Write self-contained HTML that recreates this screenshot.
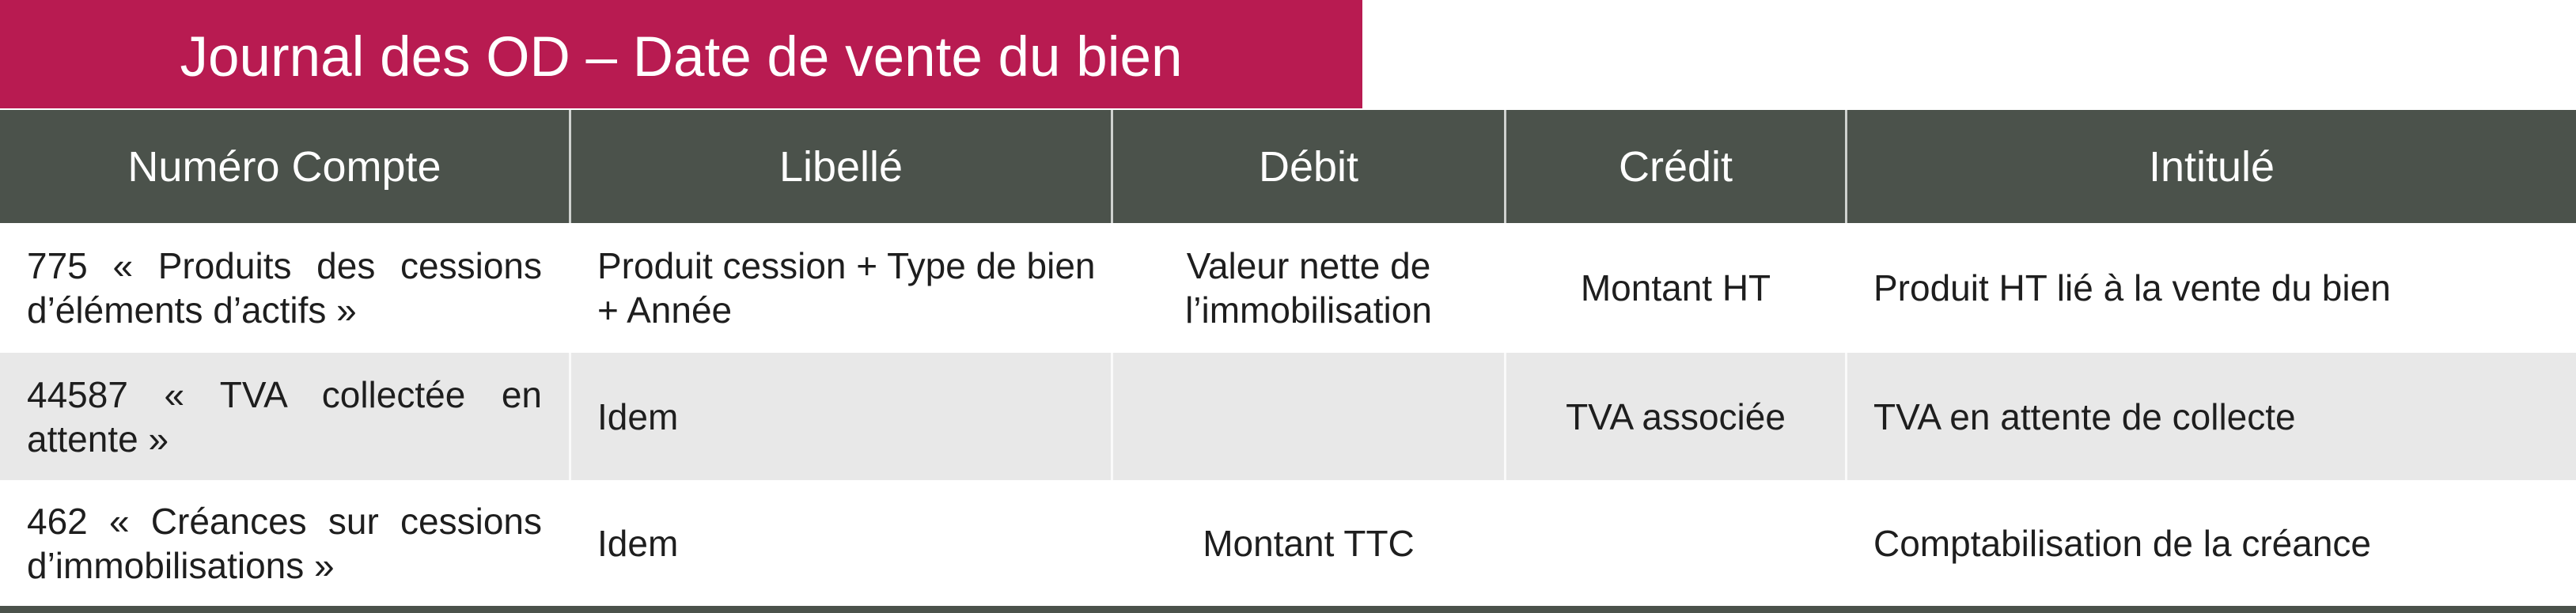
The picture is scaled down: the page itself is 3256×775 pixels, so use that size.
<!DOCTYPE html>
<html><head><meta charset="utf-8"><style>
body{margin:0;width:3256px;height:775px;background:#fff;overflow:hidden;font-family:"Liberation Sans Narrow","Liberation Sans",sans-serif;position:relative}
.ban{position:absolute;left:0;top:0;width:1722px;height:137px;background:#b81b51;color:#fff;font-size:71px;line-height:145px;text-align:center}
.row{position:absolute;left:0;width:3256px}
.c{position:absolute;top:0;bottom:0;display:flex;align-items:center;box-sizing:border-box}
.h{background:#4b524b;color:#fff;font-size:54px;justify-content:center;border-right:3px solid #cfd2cf}
.b{font-size:46px;color:#1e1e1e;line-height:56px;border-right:3px solid #fff}
.g .b{border-right-color:#fafafa}
.j{text-align:justify;text-align-last:left;padding:0 34px;display:block}
</style></head><body>
<div class="ban">Journal des OD – Date de vente du bien</div>
<div class="row" style="top:139px;height:143px">
<div class="c h" style="left:0;width:722px">Numéro Compte</div>
<div class="c h" style="left:722px;width:685px">Libellé</div>
<div class="c h" style="left:1407px;width:497px">Débit</div>
<div class="c h" style="left:1904px;width:431px">Crédit</div>
<div class="c h" style="left:2335px;width:921px;border-right:none">Intitulé</div>
</div>
<div class="row" style="top:282px;height:164px;background:#fff">
<div class="c b" style="left:0;width:722px"><div class="j" style="width:100%;box-sizing:border-box">775 « Produits des cessions d’éléments d’actifs »</div></div>
<div class="c b" style="left:722px;width:685px;padding-left:33px">Produit cession + Type de bien<br>+ Année</div>
<div class="c b" style="left:1407px;width:497px;justify-content:center;text-align:center">Valeur nette de<br>l’immobilisation</div>
<div class="c b" style="left:1904px;width:431px;justify-content:center">Montant HT</div>
<div class="c b" style="left:2335px;width:921px;padding-left:33px;border:none">Produit HT lié à la vente du bien</div>
</div>
<div class="row g" style="top:446px;height:161px;background:#e8e8e8">
<div class="c b" style="left:0;width:722px"><div class="j" style="width:100%;box-sizing:border-box">44587 « TVA collectée en attente »</div></div>
<div class="c b" style="left:722px;width:685px;padding-left:33px">Idem</div>
<div class="c b" style="left:1407px;width:497px"></div>
<div class="c b" style="left:1904px;width:431px;justify-content:center">TVA associée</div>
<div class="c b" style="left:2335px;width:921px;padding-left:33px;border:none">TVA en attente de collecte</div>
</div>
<div class="row" style="top:607px;height:159px;background:#fff">
<div class="c b" style="left:0;width:722px"><div class="j" style="width:100%;box-sizing:border-box">462 « Créances sur cessions d’immobilisations »</div></div>
<div class="c b" style="left:722px;width:685px;padding-left:33px">Idem</div>
<div class="c b" style="left:1407px;width:497px;justify-content:center">Montant TTC</div>
<div class="c b" style="left:1904px;width:431px"></div>
<div class="c b" style="left:2335px;width:921px;padding-left:33px;border:none">Comptabilisation de la créance</div>
</div>
<div class="row" style="top:766px;height:9px;background:#4b524b"></div>
</body></html>
